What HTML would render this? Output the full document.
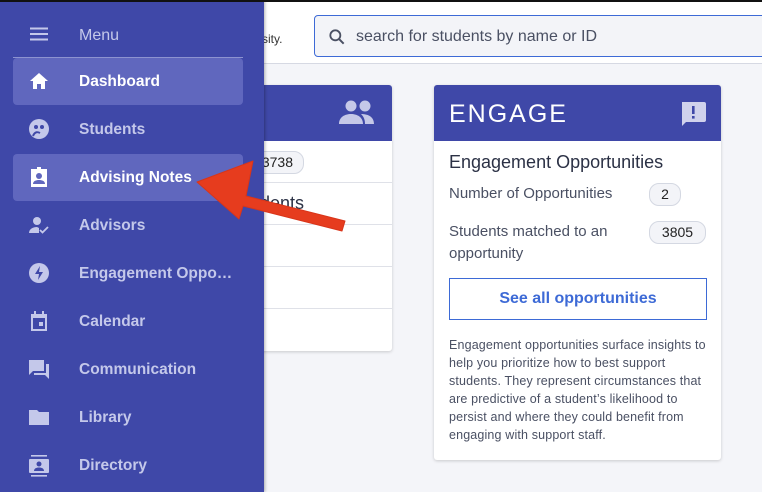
<!DOCTYPE html>
<html><head><meta charset="utf-8"><style>
*{margin:0;padding:0;box-sizing:border-box}
body{width:762px;height:492px;overflow:hidden;background:#f4f5f9;font-family:"Liberation Sans",sans-serif;position:relative}
.top{position:absolute;left:0;top:0;width:762px;height:2px;background:#111;z-index:5}
.header{position:absolute;left:0;top:2px;width:762px;height:62px;background:#fff;border-bottom:1px solid #d6d9e3}
.sity{position:absolute;left:262px;top:30px;font-size:12px;color:#333}
.search{position:absolute;left:314px;top:13px;width:470px;height:42px;border:1px solid #3d6ad6;border-radius:4px;background:#f3f4f8}
.search span{position:absolute;left:41px;top:12px;font-size:16px;color:#4a5063}
.card{position:absolute;background:#fff;border-radius:3px;box-shadow:0 1px 3px rgba(0,0,0,.18);overflow:hidden}
.ch{height:56px;background:#3f48a8;position:relative}
.sb{position:absolute;left:0;top:0;width:264px;height:492px;background:#3f48a8;box-shadow:1px 0 3px rgba(0,0,0,.3);z-index:3}
.it{position:absolute;left:13px;width:230px;height:47px;border-radius:4px}
.it.a{background:#6067be}
.it svg{position:absolute;left:16px;top:13px}
.it span{position:absolute;left:66px;top:15px;font-size:15.5px;font-weight:bold;color:#c4c8ea;white-space:nowrap}
.it.a span{color:#fff}
.badge{position:absolute;border:1px solid #d4d8e2;background:#f3f4f8;border-radius:10px;font-size:14px;color:#222;text-align:center;line-height:21px;height:23px}
.t{position:absolute;color:#4a5063;font-size:15px}
</style></head><body>
<div class="top"></div>
<div class="header"><div class="sity">sity.</div>
<div class="search"><svg style="position:absolute;left:12px;top:11px" width="20" height="20" viewBox="0 0 24 24"><circle cx="10" cy="10" r="6" fill="none" stroke="#4a5063" stroke-width="2.2"/><path d="M14.5 14.5L20 20" stroke="#4a5063" stroke-width="2.4"/></svg><span>search for students by name or ID</span></div></div>

<div class="card" style="left:200px;top:85px;width:192px;height:266px">
<div class="ch"><svg style="position:absolute;left:139px;top:15px" width="38" height="26" viewBox="0 0 38 26"><circle cx="12" cy="6" r="5.5" fill="#c5c8e8"/><circle cx="26" cy="6" r="5.5" fill="#c5c8e8"/><path d="M0 24c0-7 6-10 12-10s12 3 12 10z M22 14c6 0 13 2 13 10h-9c0-4-1-7-4-10z" fill="#c5c8e8"/></svg></div>
<div class="badge" style="left:40px;top:66px;width:64px;text-align:right;padding-right:10px">3738</div>
<div style="position:absolute;left:0;top:97px;width:192px;border-top:1px solid #dfe1e8"></div>
<div style="position:absolute;left:60px;top:108px;font-size:18px;color:#2b3145">dents</div>
<div style="position:absolute;left:0;top:139px;width:192px;border-top:1px solid #dfe1e8"></div>
<div style="position:absolute;left:0;top:181px;width:192px;border-top:1px solid #dfe1e8"></div>
<div style="position:absolute;left:0;top:223px;width:192px;border-top:1px solid #dfe1e8"></div>
</div>

<div class="card" style="left:434px;top:85px;width:287px;height:375px">
<div class="ch"><div style="position:absolute;left:15px;top:15px;font-size:25px;color:#fff;letter-spacing:2px">ENGAGE</div>
<svg style="position:absolute;left:246px;top:16px" width="26" height="26" viewBox="0 0 26 26"><path d="M2 1h22a2 2 0 0 1 2 2v16a2 2 0 0 1-2 2H6l-4 4z" fill="#d0d2ec"/><rect x="12" y="5" width="2.6" height="8" fill="#3f48a8"/><rect x="12" y="15" width="2.6" height="2.6" fill="#3f48a8"/></svg></div>
<div style="position:absolute;left:15px;top:67px;font-size:18px;color:#2b3145">Engagement Opportunities</div>
<div class="t" style="left:15px;top:100px">Number of Opportunities</div>
<div class="badge" style="left:215px;top:98px;width:32px">2</div>
<div class="t" style="left:15px;top:136px;line-height:22px">Students matched to an<br>opportunity</div>
<div class="badge" style="left:215px;top:136px;width:57px">3805</div>
<div style="position:absolute;left:15px;top:193px;width:258px;height:42px;border:1px solid #3d6ad6;text-align:center;line-height:40px;font-size:16px;font-weight:bold;color:#3d6ad6">See all opportunities</div>
<div style="position:absolute;left:15px;top:251px;width:260px;font-size:12.5px;line-height:18px;color:#4a5063;letter-spacing:0.15px">Engagement opportunities surface insights to help you prioritize how to best support students. They represent circumstances that are predictive of a student’s likelihood to persist and where they could benefit from engaging with support staff.</div>
</div>

<div class="sb">
<svg style="position:absolute;left:29px;top:27px" width="20" height="14" viewBox="0 0 20 14"><path d="M1 1.5h18M1 7h18M1 12.5h18" stroke="#c4c8ea" stroke-width="2"/></svg>
<div style="position:absolute;left:79px;top:27px;font-size:16px;color:#c4c8ea">Menu</div>
<div style="position:absolute;left:13px;top:57px;width:230px;border-top:1px solid #8d93d0"></div>
<div class="it a" style="top:58px"><svg width="20" height="20" viewBox="0 0 20 20"><path d="M10 2L1 10h3v8h4v-5h4v5h4v-8h3z" fill="#fff"/></svg><span>Dashboard</span></div>
<div class="it" style="top:106px"><svg width="20" height="20" viewBox="0 0 20 20"><circle cx="10" cy="10" r="10" fill="#c4c8ea"/><circle cx="7" cy="8" r="2" fill="#3f48a8"/><circle cx="13" cy="8" r="2" fill="#3f48a8"/><path d="M4 17c2-5 5-4 7-3" stroke="#3f48a8" stroke-width="2" fill="none"/></svg><span>Students</span></div>
<div class="it a" style="top:154px"><svg width="20" height="20" viewBox="0 0 20 20"><path d="M2 2h16v18H2z" fill="#fff"/><rect x="8" y="0" width="4" height="3" fill="#fff"/><circle cx="10" cy="9" r="3" fill="#6067be"/><path d="M4 17c0-3 3-4 6-4s6 1 6 4z" fill="#6067be"/></svg><span>Advising Notes</span></div>
<div class="it" style="top:202px"><svg width="20" height="20" viewBox="0 0 20 20"><circle cx="8" cy="6" r="4" fill="#c4c8ea"/><path d="M0 18c0-4 4-6 8-6l2 1v5z" fill="#c4c8ea"/><path d="M11 15l2.5 2.5L19 12" stroke="#c4c8ea" stroke-width="1.8" fill="none"/></svg><span>Advisors</span></div>
<div class="it" style="top:250px"><svg width="20" height="20" viewBox="0 0 20 20"><circle cx="10" cy="10" r="10" fill="#c4c8ea"/><path d="M11 3L6 11h4l-1 6 5-8h-4z" fill="#3f48a8"/></svg><span>Engagement Oppo…</span></div>
<div class="it" style="top:298px"><svg width="20" height="20" viewBox="0 0 20 20"><path d="M2 3h16v17H2z M4 7v11h12V7z" fill="#c4c8ea" fill-rule="evenodd"/><rect x="5" y="0" width="2" height="4" fill="#c4c8ea"/><rect x="13" y="0" width="2" height="4" fill="#c4c8ea"/><rect x="10" y="11" width="4" height="4" fill="#c4c8ea"/></svg><span>Calendar</span></div>
<div class="it" style="top:346px"><svg width="20" height="20" viewBox="0 0 20 20"><path d="M0 1h15v11H4l-4 4z" fill="#c4c8ea"/><path d="M17 5h3v15l-4-4H5v-2h12z" fill="#c4c8ea"/></svg><span>Communication</span></div>
<div class="it" style="top:394px"><svg width="20" height="20" viewBox="0 0 20 20"><path d="M0 3h8l2 2h10v13H0z" fill="#c4c8ea"/></svg><span>Library</span></div>
<div class="it" style="top:442px"><svg width="20" height="22" viewBox="0 0 20 22"><rect x="2" y="0" width="16" height="1.6" fill="#c4c8ea"/><rect x="2" y="20" width="16" height="1.6" fill="#c4c8ea"/><rect x="0" y="4" width="20" height="14" rx="1" fill="#c4c8ea"/><circle cx="10" cy="9" r="2.5" fill="#3f48a8"/><path d="M5 16c0-3 3-3.5 5-3.5s5 .5 5 3.5z" fill="#3f48a8"/></svg><span>Directory</span></div>
</div>

<svg style="position:absolute;left:0;top:0;z-index:4" width="762" height="492"><path d="M197 182L253 161L246 196L345 221L342 231L243 206L239 219z" fill="#e63c1e" stroke="#d8351a" stroke-width="1" stroke-linejoin="round"/></svg>
</body></html>
